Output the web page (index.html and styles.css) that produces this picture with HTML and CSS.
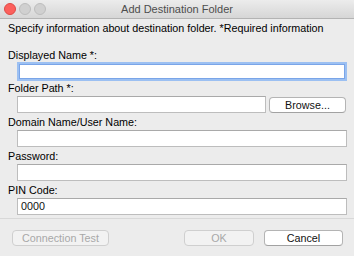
FILE: index.html
```html
<!DOCTYPE html>
<html lang="en">
<head>
    <title>Add Destination Folder</title>
    <link rel="stylesheet" href="styles.css">
</head>
<body>
<div class="window">
    <div class="titlebar">
        <div class="lights">
            <span class="light close"></span>
            <span class="light"></span>
            <span class="light"></span>
        </div>
        <div class="title">Add Destination Folder</div>
        <div></div>
    </div>

    <div class="content">
        <p class="intro">Specify information about destination folder. *Required information</p>

        <div class="form">
            <label class="label">Displayed Name *:</label>
            <div class="field focused"></div>

            <label class="label">Folder Path *:</label>
            <div class="row">
                <div class="field grow"></div>
                <div class="button browse">Browse...</div>
            </div>

            <label class="label">Domain Name/User Name:</label>
            <div class="field"></div>

            <label class="label">Password:</label>
            <div class="field"></div>

            <label class="label">PIN Code:</label>
            <div class="field">0000</div>
        </div>
    </div>

    <div class="footer">
        <div class="button disabled test">Connection Test</div>
        <div class="spacer"></div>
        <div class="button disabled ok">OK</div>
        <div class="button cancel">Cancel</div>
    </div>
</div>
</body>
</html>
```

FILE: styles.css
```css
body {
    margin: 0;
    background: #ececec;
    font-family: "Liberation Sans", Arial, sans-serif;
    font-size: 10.75px;
    color: #000;
}

.window {
    width: 354px;
    height: 256px;
    background: #ececec;
    overflow: hidden;
}

.titlebar {
    display: grid;
    grid-template-columns: 1fr auto 1fr;
    align-items: center;
    height: 18px;
    background: linear-gradient(#ececec, #d6d6d6);
    border-bottom: 1px solid #b3b3b3;
    border-radius: 5px 5px 0 0;
}

.lights {
    display: flex;
    gap: 3px;
    padding-left: 4px;
}

.light {
    width: 10px;
    height: 10px;
    border-radius: 50%;
    background: #d0d0d0;
    border: 1px solid #bdbdbd;
}

.light.close {
    background: #fc605c;
    border-color: #de4a45;
}

.title {
    color: #4d4d4d;
    font-size: 11px;
}

.content {
    padding: 0 7px 0 8px;
}

.intro {
    margin: 2px 0 0;
    line-height: 14px;
}

.form {
    display: flex;
    flex-direction: column;
    margin-top: 13px;
}

.label {
    line-height: 14px;
    margin-top: 2px;
}

.form .label:first-child {
    margin-top: 0;
}

.field {
    height: 15px;
    margin: 1px 0 0 9px;
    background: #fff;
    border: 1px solid #bdbdbd;
    border-top-color: #a9a9a9;
    padding: 0 3px;
    line-height: 15px;
    color: #111;
}

.field.focused {
    border: 1px solid #7aa5e8;
    box-shadow: 0 0 0 2px #9cc0f2;
    margin-top: 2px;
    margin-right: 2px;
    margin-left: 11px;
    height: 13px;
}

.row {
    display: flex;
    align-items: center;
    gap: 3px;
    margin-top: 1px;
}

.row .field {
    margin-top: 0;
}

.grow {
    flex: 1;
}

.button {
    height: 14px;
    line-height: 14px;
    text-align: center;
    background: #fff;
    border: 1px solid #b4b4b4;
    border-bottom-color: #a2a2a2;
    border-radius: 4px;
    color: #111;
}

.browse {
    width: 75px;
    margin-right: 1px;
}

.footer {
    display: flex;
    align-items: center;
    gap: 10px;
    margin-top: 3px;
    padding: 11px 11px 0 12px;
    border-top: 1px solid #d8d8d8;
}

.spacer {
    flex: 1;
}

.button.disabled {
    background: #f2f2f2;
    border-color: #cfcfcf;
    color: #a8a8a8;
}

.test {
    width: 95px;
}

.ok {
    width: 68px;
}

.cancel {
    width: 77px;
}
```
